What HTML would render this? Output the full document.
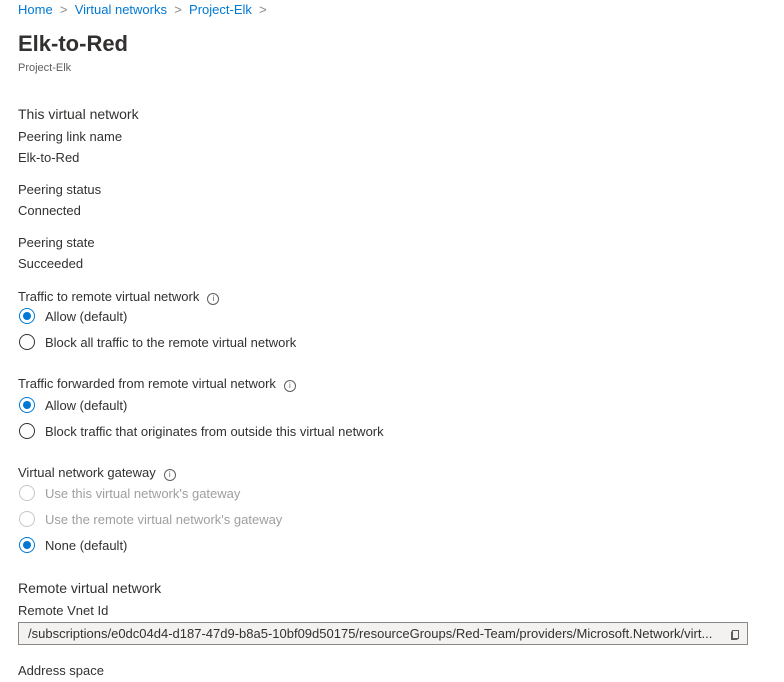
<!DOCTYPE html>
<html><head><meta charset="utf-8"><style>
body{margin:0;width:784px;height:682px;background:#fff;font-family:"Liberation Sans",sans-serif;color:#323130;position:relative;overflow:hidden}
.a{position:absolute;white-space:nowrap;font-size:13px;line-height:16px}
.l{color:#0078d4;font-size:13px}
.r{position:absolute;left:19px;width:16px;height:16px;box-sizing:border-box;border:1px solid #323130;border-radius:50%}
.r.on{border-color:#0078d4}
.r.on::after{content:"";position:absolute;left:3px;top:3px;width:8px;height:8px;border-radius:50%;background:#0078d4}
.r.dis{border-color:#c8c6c4}
.dis-t{color:#a19f9d}
.i{display:inline-block;width:10px;height:10px;border:1px solid #605e5c;border-radius:50%;font-size:8px;line-height:10px;text-align:center;color:#605e5c;margin-left:8px;vertical-align:0px}
</style></head><body>
<div class="a l" style="left:18px;top:2px">Home <span style="color:#8a8886">&nbsp;&gt;&nbsp;</span> Virtual networks <span style="color:#8a8886">&nbsp;&gt;&nbsp;</span> Project-Elk <span style="color:#8a8886">&nbsp;&gt;</span></div>
<div class="a" style="left:18px;top:30px;font-size:22px;line-height:28px;font-weight:600">Elk-to-Red</div>
<div class="a" style="left:18px;top:60px;font-size:11px;color:#605e5c">Project-Elk</div>
<div class="a" style="left:18px;top:106px;font-size:14px">This virtual network</div>
<div class="a" style="left:18px;top:129px">Peering link name</div>
<div class="a" style="left:18px;top:150px">Elk-to-Red</div>
<div class="a" style="left:18px;top:182px">Peering status</div>
<div class="a" style="left:18px;top:203px">Connected</div>
<div class="a" style="left:18px;top:235px">Peering state</div>
<div class="a" style="left:18px;top:256px">Succeeded</div>
<div class="a" style="left:18px;top:289px">Traffic to remote virtual network<span class="i">i</span></div>
<div class="r on" style="top:308px"></div><div class="a" style="left:45px;top:309px">Allow (default)</div>
<div class="r" style="top:334px"></div><div class="a" style="left:45px;top:335px">Block all traffic to the remote virtual network</div>
<div class="a" style="left:18px;top:376px">Traffic forwarded from remote virtual network<span class="i">i</span></div>
<div class="r on" style="top:397px"></div><div class="a" style="left:45px;top:398px">Allow (default)</div>
<div class="r" style="top:423px"></div><div class="a" style="left:45px;top:424px">Block traffic that originates from outside this virtual network</div>
<div class="a" style="left:18px;top:465px">Virtual network gateway<span class="i">i</span></div>
<div class="r dis" style="top:485px"></div><div class="a dis-t" style="left:45px;top:486px">Use this virtual network's gateway</div>
<div class="r dis" style="top:511px"></div><div class="a dis-t" style="left:45px;top:512px">Use the remote virtual network's gateway</div>
<div class="r on" style="top:537px"></div><div class="a" style="left:45px;top:538px">None (default)</div>
<div class="a" style="left:18px;top:580px;font-size:14px">Remote virtual network</div>
<div class="a" style="left:18px;top:603px">Remote Vnet Id</div>
<div style="position:absolute;left:18px;top:622px;width:730px;height:23px;box-sizing:border-box;border:1px solid #8a8886;background:#f3f2f1"></div>
<div class="a" style="left:28px;top:626px;font-size:13px">/subscriptions/e0dc04d4-d187-47d9-b8a5-10bf09d50175/resourceGroups/Red-Team/providers/Microsoft.Network/virt...</div>
<svg style="position:absolute;left:729px;top:628px" width="12" height="12" viewBox="0 0 12 12" fill="none" stroke="#605e5c" stroke-width="1"><rect x="3.5" y="2.5" width="6" height="8"/><path d="M2.5 3.5v8h6"/></svg>
<div class="a" style="left:18px;top:663px">Address space</div>
</body></html>
